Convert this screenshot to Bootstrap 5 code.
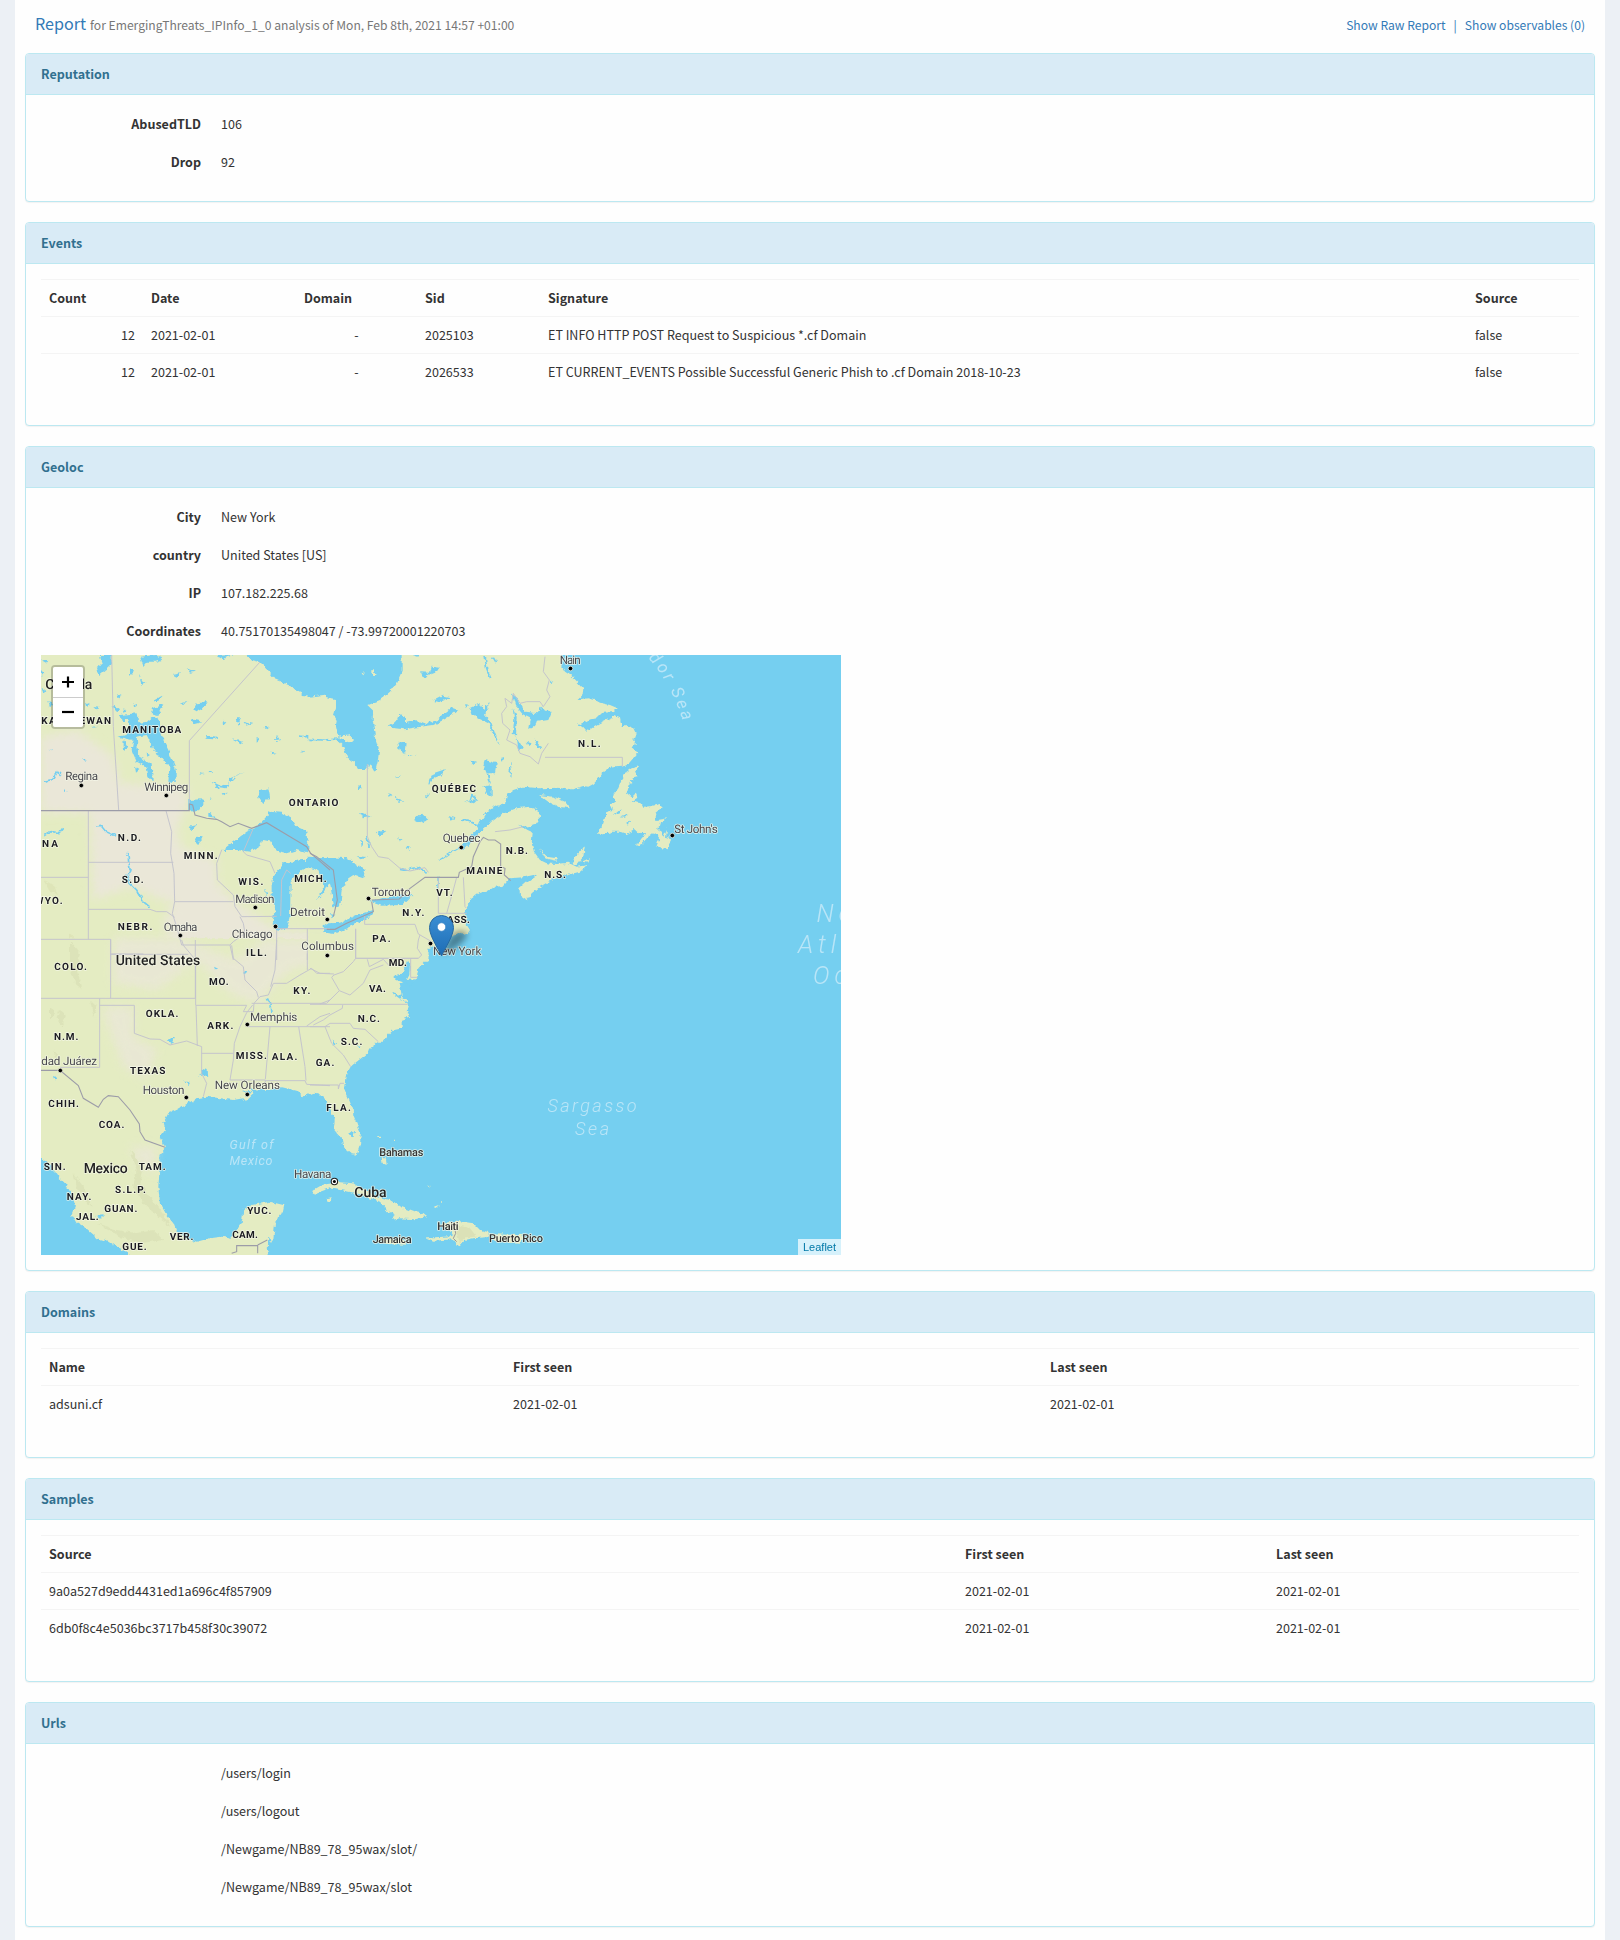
<!DOCTYPE html>
<html lang="en">
<head>
<meta charset="utf-8">
<meta name="viewport" content="width=device-width, initial-scale=1">
<title>Report</title>
<link rel="stylesheet" href="https://cdn.jsdelivr.net/npm/bootstrap@5.3.0/dist/css/bootstrap.min.css">
<style>
body{background:#ecf0f5;font-family:"Noto Sans CJK SC","Open Sans",sans-serif;font-size:12.54px;line-height:20px;color:#333}
.sheet{background:#fefefe;margin:0 15px;padding:0 10px;height:1940px}
.report-head{height:53px;padding:15px 10px 0 10px;color:#777;font-size:12.1px}
.report-head a,.report-head .sep{color:#337ab7;text-decoration:none}
.report-head .ttl{font-size:16.12px;font-weight:400;color:#337ab7}
.report-head .line{margin-top:-2px;gap:4px}
.panel{border:1px solid #bce8f1;border-radius:4px;background:#fefefe;box-shadow:0 1px 1px rgba(0,0,0,.05);margin-bottom:20px}
.panel>.card-header{background:#d9ebf6;color:#31708f;font-weight:700;padding:10px 15px;border-bottom:1px solid #bce8f1;border-radius:3px 3px 0 0;line-height:20px}
.panel>.card-body{padding:15px}
.pair{height:38px;padding-top:4px;gap:20px}
.pair dt{width:160px;text-align:right;font-weight:700}
.pair dd,.pair dt{margin:0}
.grid-table{table-layout:fixed;margin-bottom:20px;color:#333;--bs-table-bg:transparent;--bs-table-color:#333}
.grid-table th,.grid-table td{padding:8px;border:0;border-top:1px solid #f4f4f4;line-height:20px}
.map{width:800px;height:600px;overflow:hidden;background:#75cff0}
.map svg.tiles{display:block}
.zoomer{left:10px;top:10px;width:34px;border:2px solid rgba(0,0,0,.2);border-radius:4px;background-clip:padding-box}
.zoomer a{display:flex;align-items:center;justify-content:center;height:29px;background:#fff}
.zoomer a:first-child{border-bottom:1px solid #ccc;height:31px;border-radius:2px 2px 0 0}
.zoomer a:last-child{border-radius:0 0 2px 2px;padding-bottom:1px}
.attrib{right:0;bottom:0;width:43px;height:16px;background:rgba(255,255,255,.7);font:11px/16px "Liberation Sans",Arial,sans-serif;color:#0078a8;text-align:center}
.land{fill:#e4ecc2}.sea{fill:#75cff0}
.river{fill:none;stroke:#75cff0;stroke-width:5}
.state{fill:none;stroke:#c3c3cc;stroke-width:2.9}
.nation{fill:none;stroke:#9c9ca8;stroke-width:3.3}
.lab{font-family:Roboto,sans-serif;paint-order:stroke;stroke:#f6f8ea;stroke-width:5;stroke-linejoin:round;stroke-opacity:.75;text-rendering:geometricPrecision}
.prov{font-size:30px;font-weight:700;fill:#1c1c22}
.town{font-size:35px;fill:#48484e}
.ctry{font-size:42px;font-weight:500;fill:#222}
.isle{font-size:33px;font-weight:500;fill:#333}
.ocean{font-family:Roboto,sans-serif;font-style:italic;font-weight:300;fill:#b9e5f7}
</style>
<script src="https://cdn.jsdelivr.net/npm/bootstrap@5.3.0/dist/js/bootstrap.bundle.min.js"></script>
</head>
<body>
<main class="sheet">
  <header class="report-head d-flex justify-content-between">
    <div class="line d-flex align-items-baseline"><span class="ttl">Report</span><span>for EmergingThreats_IPInfo_1_0 analysis of Mon, Feb 8th, 2021 14:57 +01:00</span></div>
    <div><a href="#">Show Raw Report</a><span class="sep mx-2">|</span><a href="#">Show observables (0)</a></div>
  </header>

  <section class="panel">
    <div class="card-header">Reputation</div>
    <div class="card-body">
      <dl class="m-0">
        <div class="pair d-flex"><dt>AbusedTLD</dt><dd>106</dd></div>
        <div class="pair d-flex"><dt>Drop</dt><dd>92</dd></div>
      </dl>
    </div>
  </section>

  <section class="panel">
    <div class="card-header">Events</div>
    <div class="card-body">
      <table class="table grid-table">
        <colgroup><col style="width:102px"><col style="width:153px"><col style="width:121px"><col style="width:123px"><col><col style="width:112px"></colgroup>
        <tbody>
        <tr><th>Count</th><th>Date</th><th>Domain</th><th>Sid</th><th>Signature</th><th>Source</th></tr>
        <tr><td class="text-end">12</td><td>2021-02-01</td><td class="text-center">-</td><td>2025103</td><td>ET INFO HTTP POST Request to Suspicious *.cf Domain</td><td>false</td></tr>
        <tr><td class="text-end">12</td><td>2021-02-01</td><td class="text-center">-</td><td>2026533</td><td>ET CURRENT_EVENTS Possible Successful Generic Phish to .cf Domain 2018-10-23</td><td>false</td></tr>
        </tbody>
      </table>
    </div>
  </section>

  <section class="panel">
    <div class="card-header">Geoloc</div>
    <div class="card-body">
      <dl class="m-0">
        <div class="pair d-flex"><dt>City</dt><dd>New York</dd></div>
        <div class="pair d-flex"><dt>country</dt><dd>United States [US]</dd></div>
        <div class="pair d-flex"><dt>IP</dt><dd>107.182.225.68</dd></div>
        <div class="pair d-flex"><dt>Coordinates</dt><dd>40.75170135498047 / -73.99720001220703</dd></div>
      </dl>
      <div class="map position-relative">
        <svg class="tiles" width="800" height="600" viewBox="0 0 800 600">
          <defs>
            <filter id="rough" x="0" y="0" width="800" height="600" filterUnits="userSpaceOnUse"><feTurbulence type="fractalNoise" baseFrequency=".22" numOctaves="2" seed="4"/><feDisplacementMap in="SourceGraphic" scale="5" xChannelSelector="R" yChannelSelector="G"/></filter>
            <filter id="soft" x="-20%" y="-20%" width="140%" height="140%"><feGaussianBlur stdDeviation="14"/></filter>
            <filter id="shade" x="-50%" y="-50%" width="200%" height="200%"><feGaussianBlur stdDeviation="3"/></filter>
            <linearGradient id="pin" x1="0" y1="0" x2="0" y2="1"><stop offset="0" stop-color="#3b8fd4"/><stop offset="1" stop-color="#1d6cb4"/></linearGradient>
          </defs>
          <rect width="800" height="600" fill="#75cff0"/>
          <g filter="url(#rough)">
            <!-- north-west quarter -->
            <g transform="translate(-11,-15) scale(.33333)">
              <path class="land" d="M0 0H905V965H0z"/>
              <g fill="#eae7d8" filter="url(#soft)">
                <path d="M33 290L140 270 250 350 270 430 470 440 470 500 440 560 450 620 560 660 560 730 620 790 740 870 900 880V960H450L400 850 430 790 300 740 190 780 180 520H33z"/>
              </g>
              <g fill="#dce2b4" opacity=".7"><path d="M40 720L75 740 85 765 60 755z"/><path d="M120 880L138 900 132 950 120 945z"/></g>
              <path class="sea" d="M635 30L665 60 690 66 710 85 735 118 775 135 800 150 830 166 910 170V30z"/>
              <path class="sea" d="M210 45H245V70L230 85 205 105 198 85 215 75zM330 50L375 45 395 60 380 65 350 65 340 78zM300 85L312 95 300 108zM425 105L450 100 440 113zM470 85L495 95 480 98zM560 48L610 45 575 58zM330 118L348 130 335 135zM365 185L400 165 385 182zM370 205L400 192 385 228 362 222zM450 188L472 183 460 195zM490 210L500 190 533 187 515 207 500 215zM485 238L520 245 490 253zM580 240L590 250 578 250zM620 235L633 235 625 255zM640 245L668 252 650 257zM700 262L718 260 708 267zM528 285L568 292 550 298 530 296zM605 298L640 305 632 313zM680 290L690 298 680 305zM740 285L750 300 738 303zM720 335L740 338 725 343zM815 328L822 335 815 338z"/>
              <path class="sea" d="M262 162L275 168 265 178zM165 185L180 195 168 200zM190 198L210 200 200 208zM248 195L268 208 255 215zM310 190L322 197 312 202zM55 182L66 190 60 200zM270 225L320 220 325 250 350 245 370 230 390 240 390 270 400 300 415 330 437 385 437 425 415 425 418 380 395 350 380 345 350 285 320 290 325 350 365 370 368 420 355 415 350 380 320 365 305 330 310 300 262 290 290 285 300 240 275 240zM280 300L292 320 282 330zM315 380L328 390 318 398z"/>
              <path class="sea" d="M475 480L520 478 520 500 495 518 475 510zM535 515L560 533 535 530zM545 425L570 438 597 430 620 405 645 397 600 415 590 445 555 440zM690 450L715 445 720 470 700 492 685 470zM508 400L525 402 512 404zM535 395L550 397 540 400zM578 460L594 458 582 466zM538 472L550 475 542 481zM475 560L500 555 485 570zM500 590L515 592 505 612 495 605z"/>
              <path class="sea" d="M577 630L610 605 650 575 680 560 705 535 720 515 755 518 785 535 800 560 828 572 832 600 845 635 830 640 800 630 770 640 735 630 725 605 700 600 690 618 660 635 620 630z"/>
              <path class="sea" d="M725 735L735 700 760 670 800 662 840 658 910 655V680L850 680 820 690 795 705 782 725 780 830 770 865 745 872 728 845 735 800 725 770z"/>
              <path class="sea" d="M705 750L712 757 708 768zM900 700L885 745 862 770 870 780 890 765 910 755zM158 355L168 360 162 366zM58 330L70 328 62 334zM103 450L113 455 105 459zM33 60L55 60 48 68zM33 90L42 100 33 110zM35 140L48 150 40 162zM188 262L200 257 192 268zM385 48L395 50 388 58zM325 100L332 108 326 112zM280 205L290 210 284 216zM350 340L360 345 352 350z"/>
              <path class="river" d="M805 288L850 292 870 300 905 298M42 424L70 418 82 395 92 405M198 558L212 556 228 575 258 588M40 588L62 575 88 578 98 565"/>
              <path class="river" d="M292 635L300 690 290 720 320 750 340 785 362 803"/>
            </g>
            <!-- north-east quarter -->
            <g transform="translate(269,-15) scale(.33333)">
              <path class="land" d="M-5 30H754V443L690 445 640 440 610 450 590 465 585 490 555 500 530 515 510 545 500 570 470 600 450 622 460 630 490 600 520 565 545 545 580 520 620 505 660 500 688 512 690 535 675 555 650 560 625 555 650 570 668 578 665 610 672 635 690 660 715 672 700 690 670 705 640 712 600 715 580 738 555 740 530 755 505 760 485 775 470 800 465 825 475 840 470 855 480 870 470 885 455 875 440 885 420 890 400 900 380 915 355 925V965H-5z"/>
              <path class="sea" d="M-25 30H275V95L262 125 240 155 210 180 172 195 190 212 188 240 195 290 207 330 203 365 195 398 178 370 170 390 145 390 135 370 110 350 100 320 80 300 85 290 78 260 80 240 72 225 78 205V178L50 172 40 165 0 170-25 168z"/>
              <path class="land" d="M85 290L120 286 132 300 125 308 105 302zM155 100L165 97 158 104zM180 92L190 90 200 105 190 105zM687 465L730 470 765 485 780 505 745 500 715 485zM690 625L710 650 740 655 740 662 705 655zM685 665L700 670 740 672 775 668 800 680 835 675 810 695 770 705 740 715 715 725 690 740 665 760 650 780 630 765 628 745 650 725 680 705 672 690zM825 615L820 650 800 675 788 670 795 650 810 635zM815 665L838 655 835 668zM865 580L880 550 890 515 905 510V578z"/>
              <path class="sea" d="M300 43L330 43 325 50zM330 97L360 98 365 80 388 83 380 95 355 105 345 117zM370 182L400 167 420 172 385 187zM235 258L265 240 268 222 285 230 285 250 320 240 350 252 380 240 395 225 425 203 445 210 425 225 400 240 370 255 320 262 280 268 255 265zM265 305L290 310 285 345 320 345 300 350 270 335zM478 205L510 190 520 210 535 185 535 205 525 225 545 250 555 280 570 315 550 285 535 250 505 235 485 225zM360 420L370 400 405 388 395 405 370 415 358 435zM480 362L498 365 490 375zM525 360L560 370 555 400 530 400 520 375zM602 365L608 410 598 400zM520 440L545 435 545 470 530 460zM465 485L505 480 495 490zM415 528L437 535 425 542zM312 540L335 520 355 540 330 550zM255 410L270 408 260 415zM255 468L280 485 268 485zM235 463L245 468 235 470zM145 435L155 443 147 450zM150 515L182 530 160 535zM200 575L230 572 210 587zM265 590L278 600 270 605zM290 620L302 622 298 630zM140 648L175 652 155 658zM345 470L358 460 350 472zM150 600L158 605 152 620z"/>
              <path class="sea" d="M605 160L625 180 645 215 680 220 695 200 705 215 725 215 715 240 680 245 670 265 655 265 660 235 640 225 615 195zM608 205L620 230 618 290 608 280 613 240zM620 290L638 320 625 332zM650 305L665 310 655 318zM672 295L695 325 680 320zM720 122L730 125 722 130zM575 352L582 360 574 365zM465 192L478 195 470 200z"/>
              <path class="sea" d="M-12 650L60 652 110 655 165 690 160 715 130 705 115 715 95 750 92 790 72 805 65 760 60 730 35 765 20 778 45 740 25 690-12 680zM40 860L55 850 90 848 140 825 190 810 190 825 150 845 110 865 70 882 45 878zM180 785L215 775 265 765 310 765 290 785 270 795 215 797zM60 822L75 825 65 835z"/>
              <path class="river" d="M525 45L530 85 542 115M548 50L560 70M450 622L420 640 390 660M350 700L320 683 290 690 270 685M385 710L383 745M455 540L480 545 505 556M-5 298L40 300 85 297M500 480L485 465 478 490M532 400L540 430M170 590L178 620"/>
            </g>
            <g transform="translate(519,-15) scale(.33333)">
              <path class="land" d="M-5 30L3 75 15 95 35 108 52 125 70 145 68 165 55 178 85 175 105 180 120 188 150 195 173 205 165 213 130 215 110 235 85 240 60 253 80 275 100 262 120 250 140 240 165 228 180 235 185 260 195 255 220 265 230 285 220 300 228 312 215 325 232 340 215 360 205 372 190 380 160 382 145 385 130 395 120 412 100 432 85 440 70 438 30 450-5 443z"/>
              <path class="land" d="M215 385L240 378 225 395 235 408 220 412 205 440 200 460 215 470 230 460 235 470 215 485 245 490 250 500 275 498 300 492 308 500 285 520 290 540 322 535 300 550 295 568 310 590 322 565 318 590 333 595 325 628 305 625 290 618 298 595 285 575 265 590 245 612 228 618 245 595 260 580 235 578 225 570 200 582 180 575 150 575 115 582 115 570 140 550 150 535 135 530 140 515 160 510 150 490 165 485 160 465 175 445 185 420 200 395z"/>
              <path class="sea" d="M158 528L185 505 180 520zM182 532L208 520 195 533zM198 548L210 545 207 557z"/>
              <path class="river" d="M55 252L75 262M115 235L165 228"/>
            </g>
            <!-- south-west quarter -->
            <g transform="translate(-11,285) scale(.33333)">
              <path class="land" d="M0-5H905V458L880 460 855 455 820 470 800 452 750 440 720 450 665 448 670 465 650 485 640 475 610 480 570 475 530 470 500 475 470 492 440 510 415 520 400 548 405 570 392 590 405 625 388 645V700L385 740 390 790 410 825 430 850 440 875 470 895 500 905 540 895 575 890 600 895 620 870 635 850 640 810 665 795 720 785 760 795 755 820 735 850 730 900 722 905 715 885 712 965H320L300 945 265 925 235 905 200 895 165 865 140 850 125 825 135 800 130 770 105 730 85 710 60 675 15 640z"/>
              <g fill="#eae7d8" filter="url(#soft)" opacity=".8"><path d="M250-5L450-5 620 60 700 0H900V60L780 90 680 190 600 160 500 60 380 150 250 130zM215 200H310V290L380 330 350 420 280 380zM300 620L380 620 370 700 330 680z"/></g>
              <g fill="#d7ddb2" opacity=".6"><path d="M120 5L150 40 140 90 158 150 135 130 120 80zM90 210L110 225 95 260 80 235zM180 180L200 200 190 230zM130 700L160 740 185 800 170 790 140 740zM300 630L340 680 330 720 350 760 400 820 420 860 395 840 340 790 310 740 320 690zM200 850L260 870 320 880 370 870 400 900 330 910 270 890zM60 200L75 220 60 240zM70 330L85 345 75 350z"/></g>
              <path class="sea" d="M68 408L80 412 75 422zM195 828L222 826 210 836zM410 300L432 292 425 312zM515 385L530 390 532 412 520 405 500 410 518 400zM462 425L480 425 475 436zM552 80L565 86 555 88zM640 93L650 98 642 103zM640 455L665 452 650 470z"/>
              <path class="river" d="M712 175L720 192 723 220"/>
            </g>
            <!-- south-east quarter -->
            <g transform="translate(269,245) scale(.33333)">
              <path class="land" d="M-5 100L355 140 355 175 340 190 325 205 320 235 305 250 285 245 270 255 275 290 290 300 294 315 290 330 300 350 275 360 275 385 250 390 235 405 222 425 205 425 185 440 170 462 140 485 122 500 108 525 102 565 115 595 128 625 130 645 140 670 152 700 150 735 140 765 125 762 100 740 95 715 80 700 72 680 75 655 60 640 62 615 45 600 25 580-5 577z"/>
              <path class="sea" d="M292 175L300 190 298 225 290 240 318 238 300 258 288 250 260 240 250 228 275 225 285 200zM245 278L272 285 275 300zM275 298L295 310 285 308zM118 700L128 690 135 700 128 712zM65 420L78 430 72 438zM140 438L152 440 148 446z"/>
              <path class="land" d="M300 175L318 200 322 232 303 232z"/>
              <path class="land" d="M5 885L10 870 45 850 75 845 130 850 160 870 205 890 240 900 270 920 310 935 340 942 352 952 310 958 270 955 240 960 255 945 230 930 210 905 180 895 140 880 90 870 60 865 30 875zM50 895L65 892 62 904 52 902zM390 972L440 962 490 970 510 990 538 997 530 1012 490 1015 465 1020 448 1040 430 1018 370 1022 345 1012 380 1012 430 1008 420 990zM215 1015L285 1020 288 1034 230 1032zM545 1003L640 1005 630 1028 550 1022zM215 775L228 775 230 795 218 790zM205 710H213V714H205zM251 718H255V724H251zM372 920L390 915 380 924zM393 904H397V908H393zM354 857H358V860H354z"/>
              <path d="M440 975L480 985 500 1010 470 1012 450 1030 440 1000z" fill="#d7ddb2" opacity=".7"/>
            </g>
          </g>

          <!-- borders -->
          <g transform="translate(-11,-15) scale(.33333)">
            <path class="state" d="M245 45L250 260 266 510M690 66L478 302V490M175 512V898M175 667H430M33 712H175M175 808H360L380 815 410 815 434 832M408 512L425 575 422 640 432 700 434 785 427 820 440 860 455 915M434 785H610M33 898H242V960M575 630L560 670 562 720 610 765 615 800 635 830 740 829M455 915H600L610 905 645 880 640 850 630 830M600 915L610 960M740 870V960M740 866H900M832 866V960M640 635L650 645 720 665 735 700M640 635L668 570M752 828L755 720 770 690 782 700M242 942H340"/>
            <path class="nation" d="M33 512H478V492L488 495 495 525 530 535 560 538 575 545 600 560 625 550 665 565 710 548 830 620 842 640 860 655 900 690"/>
          </g>
          <g transform="translate(269,-15) scale(.33333)">
            <path class="state" d="M172 372V590L185 620 205 650 235 655 270 685 300 693 345 683 355 697M705 50L700 95 718 120 710 150 720 170 700 200 690 185 650 185 630 190 610 160 605 190 585 175 590 200 575 220 578 250 600 270 590 300 620 315 630 340 660 350 685 372 695 340 715 310M705 352H937V380M385 712V820M440 712L430 750 410 820M460 712L465 800 470 805M385 820H470M164 825V853H315L325 882 365 905M137 868V955H325L335 945 322 925 325 900 330 885M0 866H40M555 575L600 570 640 560"/>
            <path class="nation" d="M0 640L20 650 70 690 82 780 70 830M50 868L75 868 110 850 190 815 185 785M185 780L268 777 300 745 345 712H445L448 697 485 680 490 650 510 605 520 592 535 600 555 600 572 612V680L585 685 583 705 602 722"/>
          </g>
          <g transform="translate(-11,285) scale(.33333)">
            <path class="state" d="M242-2V175M33 175H496V0M242 43H475M209 175V382H90M209 196H313V280L360 297 390 298 420 315 470 303 515 320V400L530 430 520 470M498 196L502 318M498 196H650L640 215H670L672 190 690 170 715 165 730 130 770 130 810 105 845 85 860 100 900 100M455 0L460 16 497 60V196M605 16L610 55 640 80 645 120 680 155 685 172M740 0L735 90 722 140M832 40V90M515 340H610M650 218L630 260 613 310 610 360 600 420H705L710 445M720 260L706 418M806 260L825 380 828 422M650 260H900M706 422H825L830 433 900 437M665 190H890L900 180M830 258L870 230 900 220M668 195L650 218"/>
            <path class="nation" d="M33 391H90L145 437 160 475 205 502 220 478 235 467 265 470 300 510 328 552 330 575 345 600 405 622M605 940L620 935V917H683V940M683 915L712 900"/>
          </g>
          <g transform="translate(269,245) scale(.33333)">
            <path class="state" d="M0 313H293M0 380H45L60 370H120L130 385 165 388 205 425M45 380L65 430 100 465 122 500M98 315L97 325 60 345 40 360 10 375M0 555H85V567L90 550H102M137 86V175H325M172 178L178 200 220 178 240 200M30 312L60 300 88 272 120 285 160 250 180 210 220 195M88 272L65 232 72 225 100 215 130 185 137 175M0 205L30 220 72 222M302 175V232H322"/>
            <path class="state" d="M432 975L437 1000 430 1015 440 1025" style="stroke:#999"/>
          </g>

          <!-- place names -->
          <g class="lab" transform="translate(-11,-15) scale(.33333)">
            <text class="ctry" x="46" y="147" textLength="141">Canada</text>
            <text class="prov" x="34" y="252" textLength="209">KATCHEWAN</text>
            <text class="prov" x="277" y="279" textLength="177">MANITOBA</text>
            <text class="town" x="106" y="421" textLength="98">Regina</text>
            <text class="town" x="343" y="452" textLength="132">Winnipeg</text>
            <text class="prov" x="263" y="602" textLength="70">N.D.</text>
            <text class="prov" x="36" y="621" textLength="48">NA</text>
            <text class="prov" x="461" y="657" textLength="102">MINN.</text>
            <text class="prov" x="275" y="729" textLength="66">S.D.</text>
            <text class="prov" x="625" y="736" textLength="75">WIS.</text>
            <text class="prov" x="793" y="726" textLength="97">MICH.</text>
            <text class="prov" x="14" y="792" textLength="84">WYO.</text>
            <text class="town" x="616" y="790" textLength="117">Madison</text>
            <text class="town" x="780" y="828" textLength="105">Detroit</text>
            <text class="prov" x="263" y="870" textLength="104">NEBR.</text>
            <text class="town" x="401" y="873" textLength="101">Omaha</text>
            <text class="town" x="605" y="893" textLength="123">Chicago</text>
            <text class="prov" x="648" y="947" textLength="63">ILL.</text>
            <text class="town" x="814" y="929" textLength="158">Columbus</text>
            <text class="prov" x="776" y="498" textLength="149">ONTARIO</text>
          </g>
          <g class="lab" transform="translate(269,-15) scale(.33333)">
            <text class="town" x="749" y="72" textLength="63">Nain</text>
            <text class="prov" x="804" y="320" textLength="68">N.L.</text>
            <text class="prov" x="365" y="455" textLength="133">QUÉBEC</text>
            <text class="town" x="398" y="606" textLength="113">Quebec</text>
            <text class="prov" x="587" y="642" textLength="67">N.B.</text>
            <text class="prov" x="469" y="703" textLength="108">MAINE</text>
            <text class="prov" x="703" y="713" textLength="65">N.S.</text>
            <text class="prov" x="379" y="768" textLength="49">VT.</text>
            <text class="town" x="185" y="767" textLength="117">Toronto</text>
            <text class="prov" x="277" y="829" textLength="66">N.Y.</text>
            <text class="prov" x="383" y="850" textLength="97">MASS.</text>
            <text class="prov" x="187" y="906" textLength="55">PA.</text>
            <text class="town" x="369" y="944" textLength="145">New York</text>
            <text class="town" x="1093" y="578" textLength="130">St John's</text>
          </g>
          <g class="lab" transform="translate(-11,285) scale(.33333)">
            <text class="ctry" x="257" y="75" textLength="254">United States</text>
            <text class="prov" x="73" y="90" textLength="98">COLO.</text>
            <text class="prov" x="537" y="134" textLength="59">MO.</text>
            <text class="prov" x="790" y="162" textLength="51">KY.</text>
            <text class="prov" x="347" y="232" textLength="98">OKLA.</text>
            <text class="town" x="660" y="244" textLength="142">Memphis</text>
            <text class="prov" x="532" y="266" textLength="78">ARK.</text>
            <text class="prov" x="72" y="299" textLength="73">N.M.</text>
            <text class="town" x="34" y="376" textLength="167">dad Juárez</text>
            <text class="prov" x="617" y="358" textLength="94">MISS.</text>
            <text class="prov" x="725" y="359" textLength="77">ALA.</text>
            <text class="prov" x="300" y="401" textLength="106">TEXAS</text>
            <text class="prov" x="857" y="379" textLength="56">GA.</text>
            <text class="town" x="554" y="447" textLength="196">New Orleans</text>
            <text class="town" x="338" y="462" textLength="125">Houston</text>
            <text class="prov" x="55" y="501" textLength="92">CHIH.</text>
            <text class="prov" x="206" y="564" textLength="77">COA.</text>
            <text class="prov" x="41" y="690" textLength="66">SIN.</text>
            <text class="ctry" x="161" y="698" textLength="132">Mexico</text>
            <text class="prov" x="326" y="690" textLength="81">TAM.</text>
            <text class="prov" x="255" y="758" textLength="93">S.L.P.</text>
            <text class="prov" x="110" y="780" textLength="74">NAY.</text>
            <text class="prov" x="223" y="817" textLength="99">GUAN.</text>
            <text class="prov" x="138" y="841" textLength="68">JAL.</text>
            <text class="prov" x="419" y="900" textLength="71">VER.</text>
            <text class="prov" x="607" y="893" textLength="77">CAM.</text>
            <text class="prov" x="652" y="823" textLength="72">YUC.</text>
            <text class="prov" x="277" y="930" textLength="73">GUE.</text>
            <text class="town" x="792" y="713" textLength="112">Havana</text>
          </g>
          <g class="lab" transform="translate(269,245) scale(.33333)">
            <text class="prov" x="236" y="197" textLength="55">MD.</text>
            <text class="prov" x="177" y="276" textLength="51">VA.</text>
            <text class="prov" x="143" y="366" textLength="67">N.C.</text>
            <text class="prov" x="92" y="435" textLength="65">S.C.</text>
            <text class="prov" x="49" y="633" textLength="74">FLA.</text>
            <text class="isle" x="208" y="768" textLength="132">Bahamas</text>
            <text class="ctry" x="133" y="891" textLength="97">Cuba</text>
            <text class="isle" x="382" y="991" textLength="64">Haiti</text>
            <text class="isle" x="188" y="1028" textLength="117">Jamaica</text>
            <text class="isle" x="537" y="1026" textLength="162">Puerto Rico</text>
          </g>
          <g class="ocean">
            <path id="lab-sea" d="M607 3Q631 28 645 76" fill="none"/>
            <text font-size="17" font-weight="400" letter-spacing="2.8"><textPath href="#lab-sea">dor Sea</textPath></text>
            <text x="775.500" y="267" font-size="25" letter-spacing="5">No</text>
            <text x="757" y="298" font-size="25" letter-spacing="5">Atl</text>
            <text x="772" y="329" font-size="25" letter-spacing="5">Oc</text>
            <text x="506.500" y="457" font-size="18" textLength="89">Sargasso</text>
            <text x="534" y="480" font-size="18" textLength="34">Sea</text>
            <text x="188.500" y="494" font-size="12.500" font-weight="400" textLength="44">Gulf of</text>
            <text x="188.500" y="510" font-size="12.500" font-weight="400" textLength="43">Mexico</text>
          </g>

          <!-- town dots -->
          <g fill="#000" stroke="#f5f7ea" stroke-width=".7">
            <circle cx="40.300" cy="130.500" r="2.300"/><circle cx="125.300" cy="140.500" r="2.300"/><circle cx="214.300" cy="252.500" r="2.300"/><circle cx="234.500" cy="271.500" r="2.300"/><circle cx="139.300" cy="280.500" r="2.300"/><circle cx="286.300" cy="264.500" r="2.300"/><circle cx="286.300" cy="300.500" r="2.300"/>
            <circle cx="529.500" cy="13.500" r="2.300"/><circle cx="420.300" cy="192.500" r="2.300"/><circle cx="327.500" cy="243.500" r="2.300"/><circle cx="389.500" cy="288.500" r="2.300"/><circle cx="631.300" cy="180.500" r="2.300"/>
            <circle cx="206.300" cy="369.500" r="2.300"/><circle cx="19.300" cy="415.500" r="2.300"/><circle cx="145.300" cy="442.500" r="2.300"/><circle cx="206.300" cy="439.500" r="2.300"/>
          </g>
          <circle cx="293.400" cy="526.500" r="3.200" fill="#fff" stroke="#222" stroke-width="1.100"/><circle cx="293.400" cy="526.500" r="1.500" fill="#000"/>

          <!-- marker -->
          <path d="M401 300L408 284Q416 272 426 278Q426 288 401 300z" fill="#000" opacity=".38" filter="url(#shade)"/>
          <path d="M400.500 301C397 293 388.500 281 388.500 272.500A12 12 0 0 1 412.500 272.500C412.500 281 404 293 400.500 301z" fill="url(#pin)" stroke="#2768a0" stroke-width="1"/>
          <circle cx="400.500" cy="272" r="4.200" fill="#fff" stroke="#2f7cc0" stroke-width=".6"/>
        </svg>
        <div class="zoomer position-absolute">
          <a href="#" aria-label="Zoom in"><svg width="12" height="12" viewBox="0 0 12 12"><path d="M6 .5V11.500M0 6H12" stroke="#000" stroke-width="2.200" fill="none"/></svg></a>
          <a href="#" aria-label="Zoom out"><svg width="12" height="12" viewBox="0 0 12 12"><path d="M0 6H12" stroke="#000" stroke-width="2.200"/></svg></a>
        </div>
        <div class="attrib position-absolute">Leaflet</div>
      </div>
    </div>
  </section>

  <section class="panel">
    <div class="card-header">Domains</div>
    <div class="card-body">
      <table class="table grid-table">
        <colgroup><col style="width:464px"><col style="width:537px"><col></colgroup>
        <tbody>
        <tr><th>Name</th><th>First seen</th><th>Last seen</th></tr>
        <tr><td>adsuni.cf</td><td>2021-02-01</td><td>2021-02-01</td></tr>
        </tbody>
      </table>
    </div>
  </section>

  <section class="panel">
    <div class="card-header">Samples</div>
    <div class="card-body">
      <table class="table grid-table">
        <colgroup><col style="width:916px"><col style="width:311px"><col></colgroup>
        <tbody>
        <tr><th>Source</th><th>First seen</th><th>Last seen</th></tr>
        <tr><td>9a0a527d9edd4431ed1a696c4f857909</td><td>2021-02-01</td><td>2021-02-01</td></tr>
        <tr><td>6db0f8c4e5036bc3717b458f30c39072</td><td>2021-02-01</td><td>2021-02-01</td></tr>
        </tbody>
      </table>
    </div>
  </section>

  <section class="panel mb-0">
    <div class="card-header">Urls</div>
    <div class="card-body">
      <dl class="m-0">
        <div class="pair d-flex"><dt></dt><dd>/users/login</dd></div>
        <div class="pair d-flex"><dt></dt><dd>/users/logout</dd></div>
        <div class="pair d-flex"><dt></dt><dd>/Newgame/NB89_78_95wax/slot/</dd></div>
        <div class="pair d-flex"><dt></dt><dd>/Newgame/NB89_78_95wax/slot</dd></div>
      </dl>
    </div>
  </section>
</main>
</body>
</html>
